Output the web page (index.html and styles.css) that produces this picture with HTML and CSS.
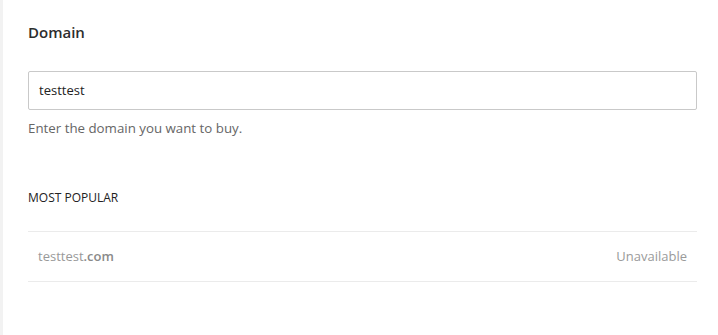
FILE: index.html
```html
<!DOCTYPE html>
<html>
<head>
<meta charset="utf-8">
<link rel="stylesheet" href="styles.css">
</head>
<body>
<div class="page">
  <div class="panel">
    <h2 class="title">Domain</h2>
    <div class="field">
      <div class="input">testtest</div>
      <p class="help">Enter the domain you want to buy.</p>
    </div>
    <h3 class="section">MOST POPULAR</h3>
    <ul class="list">
      <li class="row">
        <span class="name">testtest<b>.com</b></span>
        <span class="status">Unavailable</span>
      </li>
    </ul>
  </div>
</div>
</body>
</html>
```
FILE: styles.css
```css
* { box-sizing: border-box; }
html, body { margin: 0; padding: 0; background: #fff; }
body {
  font-family: "Open Sans", "Noto Sans", sans-serif;
  color: #333;
  width: 718px;
  height: 335px;
  overflow: hidden;
}
.page {
  display: flex;
  height: 335px;
  border-left: 3px solid #f2f2f2;
}
.panel {
  flex: 1;
  padding: 21px 21px 0 25px;
}
.title {
  margin: 0;
  font-size: 15px;
  font-weight: 600;
  line-height: 22px;
  color: #2d2d2d;
}
.field { margin-top: 28px; }
.input {
  height: 39px;
  border: 1px solid #c9c9c9;
  border-radius: 2px;
  padding: 0 10px;
  font-size: 13px;
  line-height: 37px;
  color: #222;
}
.help {
  margin: 8px 0 0;
  font-size: 13.3px;
  line-height: 20px;
  color: #666;
}
.section {
  margin: 51px 0 0;
  font-size: 12px;
  font-weight: 500;
  line-height: 18px;
  color: #222;
}
.list {
  list-style: none;
  margin: 24px 0 0;
  padding: 0;
  border-top: 1px solid #ebebeb;
}
.row {
  display: flex;
  justify-content: space-between;
  align-items: center;
  height: 50px;
  padding: 0 10px 2px;
  border-bottom: 1px solid #ebebeb;
  font-size: 13px;
  color: #999;
}
.name b { font-weight: 600; color: #8a8a8a; }
.status { color: #9a9a9a; }
```
